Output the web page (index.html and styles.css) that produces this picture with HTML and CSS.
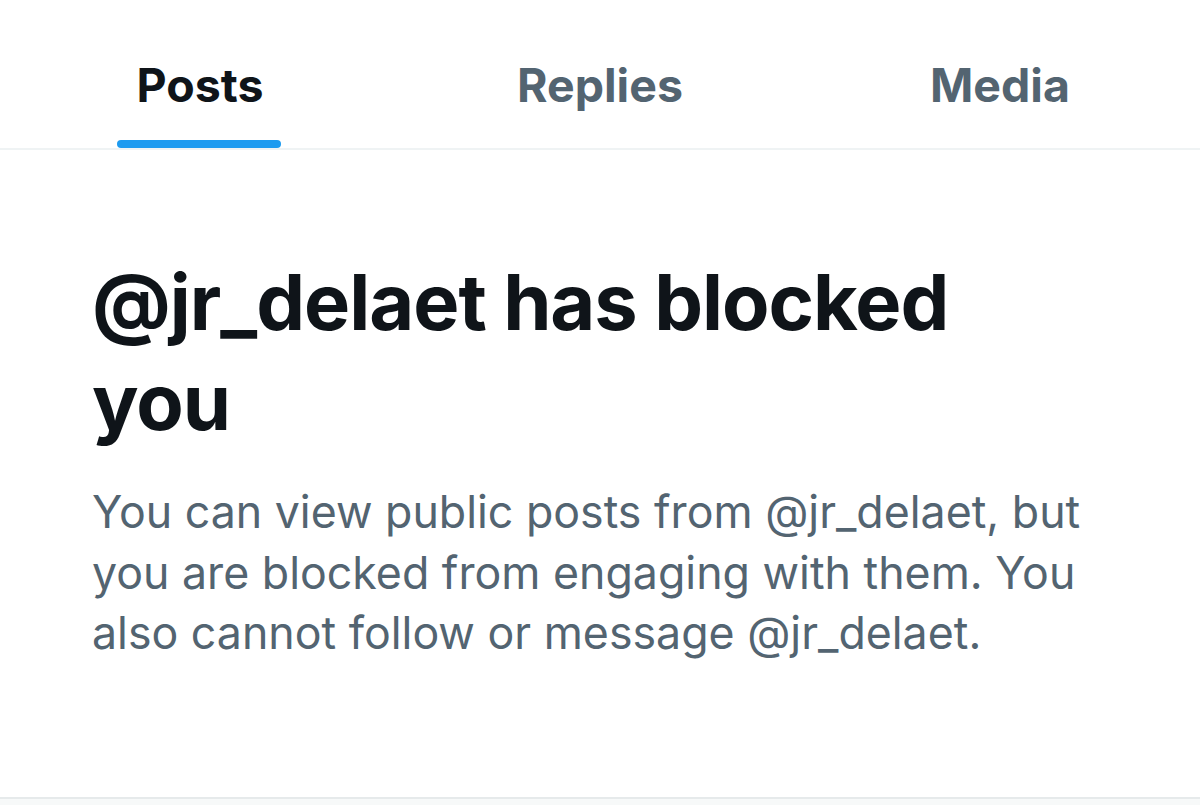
FILE: index.html
```html
<!DOCTYPE html>
<html lang="en">
<head>
<meta charset="utf-8">
<title>Blocked</title>
<link rel="stylesheet" href="styles.css">
</head>
<body>
<div class="page">
  <nav class="tabs">
    <div class="tab active"><span class="tab-label">Posts<span class="indicator"></span></span></div>
    <div class="tab"><span class="tab-label">Replies</span></div>
    <div class="tab"><span class="tab-label">Media</span></div>
  </nav>
  <section class="blocked">
    <h1 class="title">@jr_delaet has blocked you</h1>
    <p class="desc">You can view public posts from @jr_delaet, but you are blocked from engaging with them. You also cannot follow or message @jr_delaet.</p>
  </section>
  <div class="footer-sep"></div>
</div>
</body>
</html>
```

FILE: styles.css
```css
html, body {
  margin: 0;
  padding: 0;
  background: #ffffff;
}
body {
  width: 1200px;
  height: 805px;
  overflow: hidden;
  font-family: Inter, "Noto Sans", sans-serif;
  color: #0f1419;
}
.page {
  display: flex;
  flex-direction: column;
  height: 805px;
}
.tabs {
  display: flex;
  height: 150px;
  border-bottom: 2px solid #eff3f4;
  box-sizing: border-box;
}
.tab {
  flex: 1;
  display: flex;
  justify-content: center;
  align-items: stretch;
}
.tab-label {
  position: relative;
  display: block;
  padding-top: 57px;
  font-size: 46.5px;
  line-height: normal;
  font-weight: 700;
  color: #536471;
}
.tab.active .tab-label {
  color: #0f1419;
}
.indicator {
  position: absolute;
  left: -19px;
  right: -17px;
  bottom: 0;
  height: 8px;
  border-radius: 4px;
  background: #1d9bf0;
}
.blocked {
  flex: 1;
  padding: 102px 90px 0 92px;
}
.title {
  margin: 0;
  max-width: 960px;
  font-size: 77.5px;
  line-height: 100px;
  font-weight: 700;
  letter-spacing: -1px;
  color: #0f1419;
}
.desc {
  margin: 30px 0 0;
  font-size: 44.7px;
  line-height: 60.5px;
  font-weight: 400;
  color: #536471;
}
.footer-sep {
  height: 6px;
  border-top: 2px solid #e6eaeb;
  background: #f7f9f9;
}
```
